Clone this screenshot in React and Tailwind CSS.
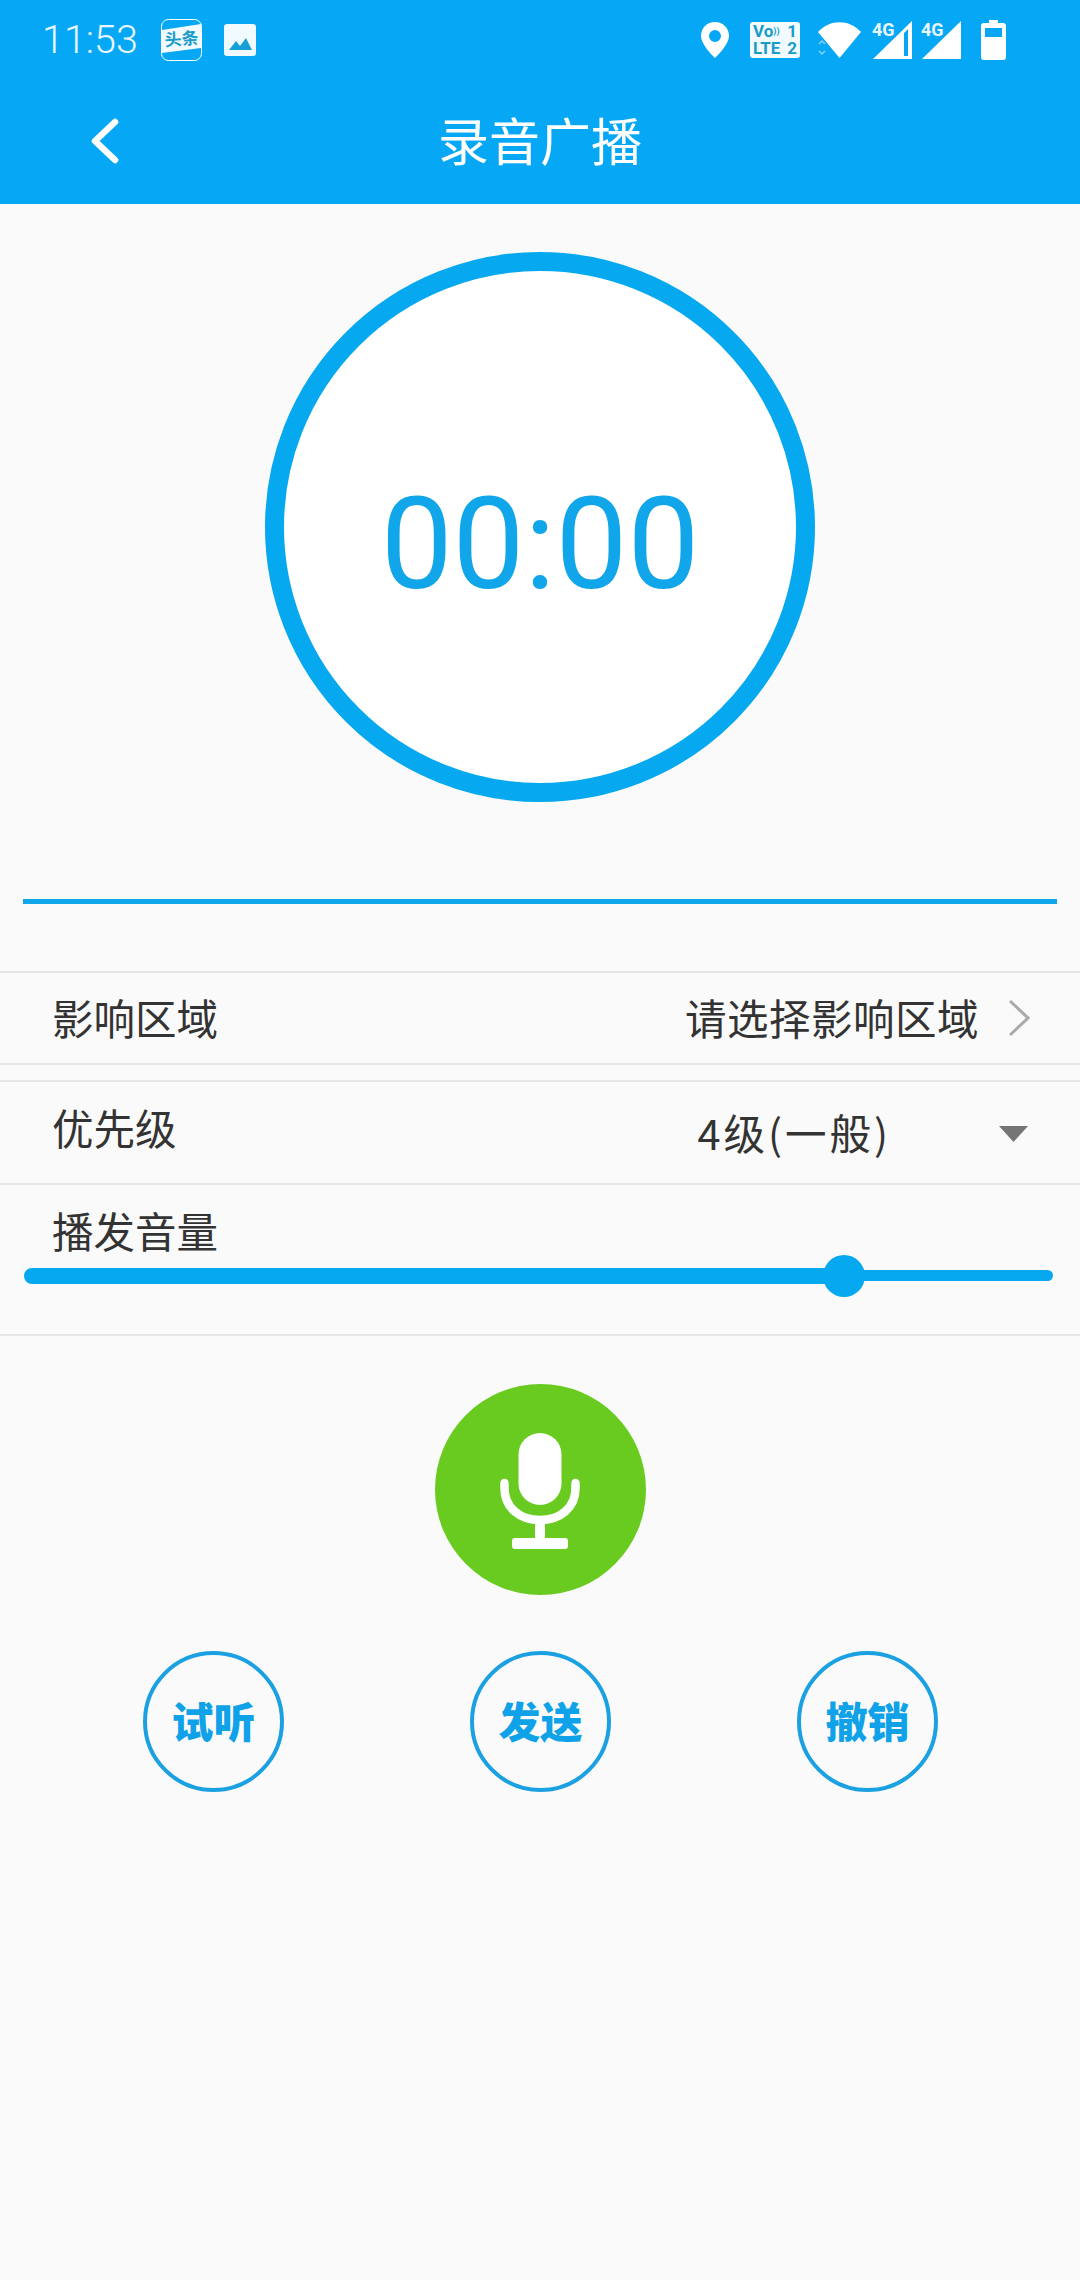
import React from "react";

const CJK = "font-['Noto_Sans_CJK_SC','Noto_Sans_CJK_JP',sans-serif]";

function StatusLeft() {
  return (
    <div className="flex items-center">
      <span className="font-['Roboto',sans-serif] text-[39.5px] font-light leading-none text-[#e8f7ff]">11:53</span>
      <svg className="ml-[23px]" width="41" height="42" viewBox="0 0 41 42">
        <rect x="0.5" y="0.5" width="40" height="41" rx="7" fill="#06a8f6" stroke="#fff" />
        <path d="M1 11 L40 5 V29 L1 34 Z" fill="#f2fbff" />
        <text x="20.5" y="26" textAnchor="middle" fontSize="17" fontWeight="700" fill="#1a9cc9" transform="rotate(-4 20 20)" fontFamily="Noto Sans CJK SC">头条</text>
      </svg>
      <svg className="ml-[22px]" width="32" height="32" viewBox="0 0 32 32">
        <rect width="32" height="32" rx="3" fill="#f0faff" />
        <path d="M5 26 L12 17 L16 22 L22 14 L28 26 Z" fill="#17a0d8" />
      </svg>
    </div>
  );
}

function StatusRight() {
  return (
    <div className="flex items-center">
      <svg width="28" height="36" viewBox="0 0 28 36">
        <path fillRule="evenodd" fill="#fff" d="M14 0C6 0 0 6 0 14c0 9 14 22 14 22s14-13 14-22C28 6 22 0 14 0Zm0 8a6 6 0 1 1 0 12 6 6 0 0 1 0-12Z" />
      </svg>
      <div className="ml-[21px] flex h-[36px] w-[50px] flex-col justify-center rounded-[3px] bg-[#f2fbff] px-[3px] font-['Roboto',sans-serif] text-[17px] font-bold leading-[17px] text-[#1a9cc9]">
        <div className="flex justify-between"><span>Vo<span className="align-top text-[9px]">))</span></span><span>1</span></div>
        <div className="flex justify-between"><span>LTE</span><span>2</span></div>
      </div>
      <svg className="ml-[18px]" width="43" height="36" viewBox="0 0 43 36">
        <path fill="#fff" d="M0 10 C12 -3 31 -3 43 10 L21.5 36 Z" />
        <path d="M1 22 L4 19 L7 22 M1 29 L4 32 L7 29" fill="none" stroke="#7fd3fa" strokeWidth="1.5" />
      </svg>
      <div className="relative ml-[12px] h-[40px] w-[39px]">
        <svg width="39" height="40" viewBox="0 0 39 40">
          <path fill="#fff" fillRule="evenodd" d="M0 39 L39 1 V39 Z M31 13 V36 H35 V9 Z" />
        </svg>
        <span className="absolute left-[-1px] top-[1px] font-['Roboto',sans-serif] text-[18px] font-bold leading-none text-[#e8f7ff]">4G</span>
      </div>
      <div className="relative ml-[10px] h-[40px] w-[39px]">
        <svg width="39" height="40" viewBox="0 0 39 40">
          <path fill="#fff" d="M0 39 L39 1 V39 Z" />
        </svg>
        <span className="absolute left-[-1px] top-[1px] font-['Roboto',sans-serif] text-[18px] font-bold leading-none text-[#e8f7ff]">4G</span>
      </div>
      <svg className="ml-[20px]" width="25" height="40" viewBox="0 0 25 40">
        <path fillRule="evenodd" fill="#fff" d="M8 0H17V3H22a3 3 0 0 1 3 3V37a3 3 0 0 1-3 3H3a3 3 0 0 1-3-3V6a3 3 0 0 1 3-3H8Z M4 8V17H21V8Z" />
      </svg>
    </div>
  );
}

function Header() {
  return (
    <header className="h-[204px] bg-[#06a8f6]">
      <div className="flex h-[80px] items-center justify-between pl-[42px] pr-[74px]">
        <StatusLeft />
        <StatusRight />
      </div>
      <div className="relative flex h-[124px] items-center justify-center pb-[6px]">
        <svg className="absolute left-[90px] top-[38px]" width="29" height="46" viewBox="0 0 29 46">
          <path d="M25 4 L5 23 L25 42" fill="none" stroke="#fff" strokeWidth="6.5" strokeLinecap="round" strokeLinejoin="round" />
        </svg>
        <span className={`${CJK} text-[51px] leading-none text-white`}>录音广播</span>
      </div>
    </header>
  );
}

function Timer() {
  return (
    <div className="mt-[48px] flex justify-center">
      <div className="flex h-[550px] w-[550px] items-center justify-center rounded-full border-[19px] border-[#06a8f0] bg-white pt-[34px]">
        <span className="font-['Roboto',sans-serif] text-[128px] font-normal leading-none text-[#11a6ea]">00:00</span>
      </div>
    </div>
  );
}

function Mic() {
  return (
    <svg className="mt-[2px]" width="80" height="116" viewBox="0 0 80 116">
      <rect x="18.5" y="0" width="43" height="72" rx="21.5" fill="#fff" />
      <path d="M4.5 50 V55 C4.5 75 20 87 40 87 C60 87 75.5 75 75.5 55 V50" fill="none" stroke="#fff" strokeWidth="8.5" strokeLinecap="round" />
      <path d="M40 88 V108" stroke="#fff" strokeWidth="10" />
      <rect x="12" y="105" width="56" height="11" rx="3" fill="#fff" />
    </svg>
  );
}

function RoundButton({ label }) {
  return (
    <div className="flex h-[141px] w-[141px] items-center justify-center rounded-full border-[4px] border-[#1ba1e2] pb-[3px]">
      <span className={`${CJK} text-[42px] font-black leading-none text-[#10a2e8]`}>{label}</span>
    </div>
  );
}

export default function App() {
  return (
    <div className={`${CJK} h-[2280px] w-[1080px] overflow-hidden bg-[#fafafa]`}>
      <Header />
      <Timer />

      <div className="mx-[23px] mt-[97px] h-[5px] bg-[#0ea6ea]" />

      <div className="mt-[67px] flex h-[94px] items-center justify-between border-y-2 border-[#e6e6e6] pl-[52px] pr-[50px] text-[41.5px] leading-none text-[#333]">
        <span>影响区域</span>
        <div className="flex items-center">
          <span className="tracking-[0.5px]">请选择影响区域</span>
          <svg className="ml-[29px]" width="22" height="38" viewBox="0 0 22 38">
            <path d="M2 2 L20 19 L2 36" fill="none" stroke="#aaa" strokeWidth="3" />
          </svg>
        </div>
      </div>

      <div className="mt-[15px] flex h-[105px] items-center justify-between border-y-2 border-[#e6e6e6] pl-[52px] pr-[52px] text-[41.5px] leading-none text-[#333]">
        <span className="mb-[9px]">优先级</span>
        <div className="flex items-center">
          <span className="mr-[108px] tracking-[3px]">4级(一般)</span>
          <svg className="mt-[2px]" width="29" height="16" viewBox="0 0 29 16">
            <path d="M0 0 H29 L14.5 16 Z" fill="#757575" />
          </svg>
        </div>
      </div>

      <div className="h-[151px] border-b-2 border-[#e6e6e6] pl-[24px] pr-[27px]">
        <div className="pl-[28px] pt-[25px] text-[41.5px] leading-none text-[#333]">播发音量</div>
        <div className="relative mt-[16px] flex h-[16px] items-center">
          <div className="h-[16px] w-[820px] rounded-l-full bg-[#06a8f0]" />
          <div className="h-[11px] flex-1 rounded-r-full bg-[#06a8f0]" />
          <div className="absolute left-[799px] top-[-13px] h-[42px] w-[42px] rounded-full bg-[#06a8f0]" />
        </div>
      </div>

      <div className="mt-[48px] flex justify-center">
        <div className="flex h-[211px] w-[211px] items-center justify-center rounded-full bg-[#69cb20]">
          <Mic />
        </div>
      </div>

      <div className="mt-[56px] flex justify-between pl-[143px] pr-[142px]">
        <RoundButton label="试听" />
        <RoundButton label="发送" />
        <RoundButton label="撤销" />
      </div>
    </div>
  );
}
